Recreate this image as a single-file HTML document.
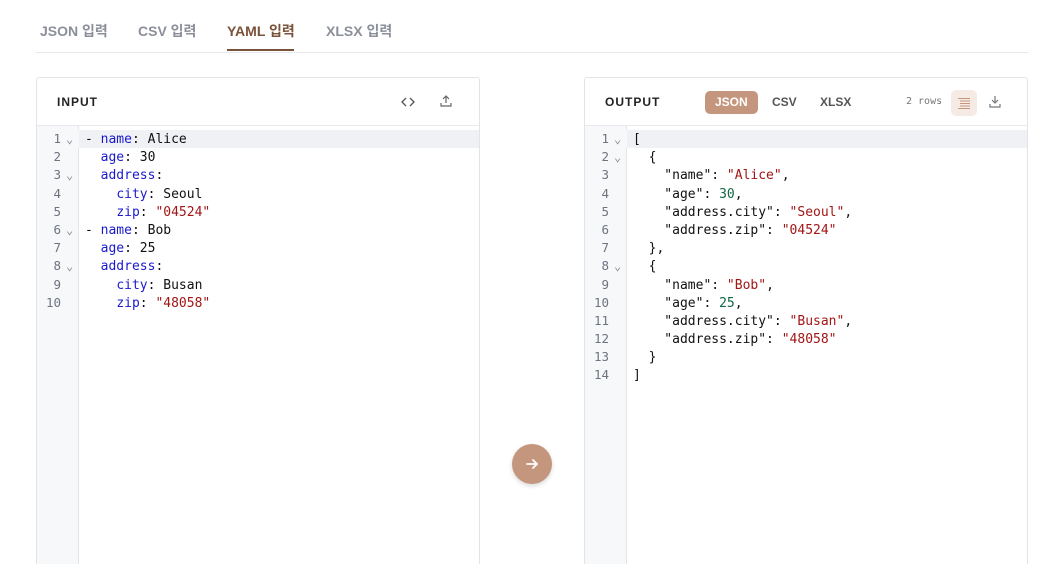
<!DOCTYPE html>
<html><head><meta charset="utf-8"><style>
*{box-sizing:border-box;margin:0;padding:0}
html,body{width:1064px;height:564px;overflow:hidden}
body{background:#fff;font-family:"Liberation Sans","Noto Sans CJK KR",sans-serif;position:relative}
.tabs{position:absolute;left:36px;top:0;width:992px;height:53px;border-bottom:1px solid #e8e8ec}
.tab{position:absolute;top:21px;font-size:14px;font-weight:bold;color:#8b8f99}
.tab.act{color:#7a5238}
.ul{position:absolute;left:227px;top:49px;width:67px;height:2px;background:#7a5238}
.panel{position:absolute;top:77px;width:444px;height:487px;border:1px solid #e3e4e8;border-bottom:none;border-radius:3px 3px 0 0;background:#fff}
.hdr{height:48px;border-bottom:1px solid #e8e9ed;position:relative}
.title{position:absolute;left:20px;top:17px;font-size:12px;font-weight:bold;letter-spacing:1px;color:#222}
.gut{position:absolute;left:0;top:48px;width:42px;bottom:0;background:#f7f8fa;border-right:1px solid #e3e4e8}
.code{position:absolute;left:0;top:52px;right:0;font-family:"DejaVu Sans Mono","Liberation Mono",monospace;font-size:13px}
.ln{height:18.2px;line-height:18.2px;position:relative;white-space:pre}
.ln .n{position:absolute;left:0;width:24px;text-align:right;color:#6e7380;font-size:12.5px}
.ln .f{position:absolute;left:29px;top:0;color:#8a8f99;font-size:12px}
.ln .t{position:absolute;left:48px;top:1px;color:#111}
.ln.hl{background:#f0f1f4}
.ln.hl:before{content:"";position:absolute;left:0;width:42px;top:0;bottom:0;background:#f7f8fa}
.k{color:#1a1acc}.s{color:#a31515}.num{color:#116644}
.seg{position:absolute;top:13px;height:23px;line-height:23px;font-size:12px;font-weight:bold;padding:0 10px;border-radius:5px;color:#555}
</style></head><body>
<div class="tabs">
<span class="tab" style="left:4px">JSON 입력</span>
<span class="tab" style="left:102px">CSV 입력</span>
<span class="tab act" style="left:191px">YAML 입력</span>
<span class="tab" style="left:290px">XLSX 입력</span>
</div>
<div class="ul"></div>

<div class="panel" style="left:36px">
<div class="hdr"><span class="title">INPUT</span>
<svg style="position:absolute;left:364px;top:18px" width="14" height="12" viewBox="0 0 14 12" fill="none" stroke="#555" stroke-width="1.3"><path d="M5 2L1 6l4 4M9 2l4 4-4 4"/></svg>
<svg style="position:absolute;left:402px;top:16px" width="14" height="14" viewBox="0 0 14 14" fill="none" stroke="#666" stroke-width="1.2"><path d="M7 9V2M4 5l3-3 3 3M2 9v3h10V9"/></svg>
</div>
<div class="gut"></div>
<div class="code">
<div class="ln hl"><span class="n">1</span><span class="f">⌄</span><span class="t">- <span class="k">name</span>: Alice</span></div>
<div class="ln"><span class="n">2</span><span class="t">  <span class="k">age</span>: 30</span></div>
<div class="ln"><span class="n">3</span><span class="f">⌄</span><span class="t">  <span class="k">address</span>:</span></div>
<div class="ln"><span class="n">4</span><span class="t">    <span class="k">city</span>: Seoul</span></div>
<div class="ln"><span class="n">5</span><span class="t">    <span class="k">zip</span>: <span class="s">"04524"</span></span></div>
<div class="ln"><span class="n">6</span><span class="f">⌄</span><span class="t">- <span class="k">name</span>: Bob</span></div>
<div class="ln"><span class="n">7</span><span class="t">  <span class="k">age</span>: 25</span></div>
<div class="ln"><span class="n">8</span><span class="f">⌄</span><span class="t">  <span class="k">address</span>:</span></div>
<div class="ln"><span class="n">9</span><span class="t">    <span class="k">city</span>: Busan</span></div>
<div class="ln"><span class="n">10</span><span class="t">    <span class="k">zip</span>: <span class="s">"48058"</span></span></div>
</div>
</div>

<div style="position:absolute;left:512px;top:444px;width:40px;height:40px;border-radius:50%;background:#c4967e;box-shadow:0 2px 5px rgba(0,0,0,.15)">
<svg style="position:absolute;left:13px;top:13px" width="14" height="14" viewBox="0 0 14 14" fill="none" stroke="#fff" stroke-width="1.8" stroke-linecap="round"><path d="M2 7h10M8 3l4 4-4 4"/></svg></div>

<div class="panel" style="left:584px">
<div class="hdr"><span class="title">OUTPUT</span>
<span class="seg" style="left:120px;background:#c4967e;color:#fff">JSON</span>
<span class="seg" style="left:177px">CSV</span>
<span class="seg" style="left:225px">XLSX</span>
<span style="position:absolute;left:321px;top:18px;font-family:'DejaVu Sans Mono',monospace;font-size:10px;color:#777">2 rows</span>
<div style="position:absolute;left:366px;top:12px;width:26px;height:26px;border-radius:5px;background:#f6ebe4">
<svg style="position:absolute;left:7px;top:7px" width="12" height="12" viewBox="0 0 12 12" stroke="#c4967e" stroke-width="1"><path d="M0 1.5h12M2 4h10M2 6.5h10M2 9h10M0 11.5h12"/></svg></div>
<svg style="position:absolute;left:403px;top:17px" width="14" height="14" viewBox="0 0 14 14" fill="none" stroke="#777" stroke-width="1.2"><path d="M7 1v7M4 5l3 3 3-3M2 9v3h10V9"/></svg>
</div>
<div class="gut"></div>
<div class="code">
<div class="ln hl"><span class="n">1</span><span class="f">⌄</span><span class="t">[</span></div>
<div class="ln"><span class="n">2</span><span class="f">⌄</span><span class="t">  {</span></div>
<div class="ln"><span class="n">3</span><span class="t">    "name": <span class="s">"Alice"</span>,</span></div>
<div class="ln"><span class="n">4</span><span class="t">    "age": <span class="num">30</span>,</span></div>
<div class="ln"><span class="n">5</span><span class="t">    "address.city": <span class="s">"Seoul"</span>,</span></div>
<div class="ln"><span class="n">6</span><span class="t">    "address.zip": <span class="s">"04524"</span></span></div>
<div class="ln"><span class="n">7</span><span class="t">  },</span></div>
<div class="ln"><span class="n">8</span><span class="f">⌄</span><span class="t">  {</span></div>
<div class="ln"><span class="n">9</span><span class="t">    "name": <span class="s">"Bob"</span>,</span></div>
<div class="ln"><span class="n">10</span><span class="t">    "age": <span class="num">25</span>,</span></div>
<div class="ln"><span class="n">11</span><span class="t">    "address.city": <span class="s">"Busan"</span>,</span></div>
<div class="ln"><span class="n">12</span><span class="t">    "address.zip": <span class="s">"48058"</span></span></div>
<div class="ln"><span class="n">13</span><span class="t">  }</span></div>
<div class="ln"><span class="n">14</span><span class="t">]</span></div>
</div>
</div>
</body></html>
